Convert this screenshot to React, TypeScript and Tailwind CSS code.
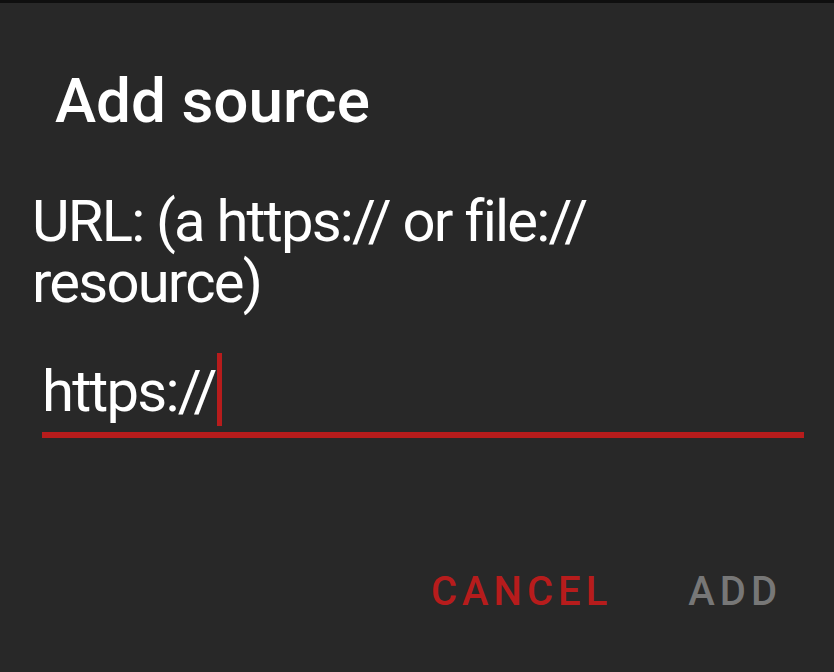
export default function App() {
	return (
		<div className="w-[834px] h-[672px] bg-[#282828] flex flex-col overflow-hidden" style={{ fontFamily: "Roboto, 'Noto Sans', sans-serif" }}>
			<div className="h-[3px] bg-[#0f0f0f]" />
			<h1 className="pl-[55px] pt-[63px] text-[62px] leading-[70px] font-medium text-white">Add source</h1>
			<p className="pl-[32px] pr-[40px] pt-[55px] text-[58px] leading-[61px] tracking-[-1.8px] text-white">
				URL: (a https:// or file:// resource)
			</p>
			<div className="ml-[42px] mr-[30px] mt-[40px] flex items-start border-b-[6px] border-[#b71c1c] h-[85px]">
				<span className="mt-[8px] text-[58px] leading-[60px] tracking-[-1.8px] text-white">https://</span>
				<span className="ml-[1px] w-[5px] h-[73px] bg-[#b71c1c]" />
			</div>
			<div className="flex justify-end gap-[76px] pr-[52px] mt-[124px]">
				<button className="text-[40px] font-medium tracking-[5px] text-[#b71c1c]">CANCEL</button>
				<button className="text-[40px] font-medium tracking-[5px] text-[#777777]">ADD</button>
			</div>
		</div>
	);
}
